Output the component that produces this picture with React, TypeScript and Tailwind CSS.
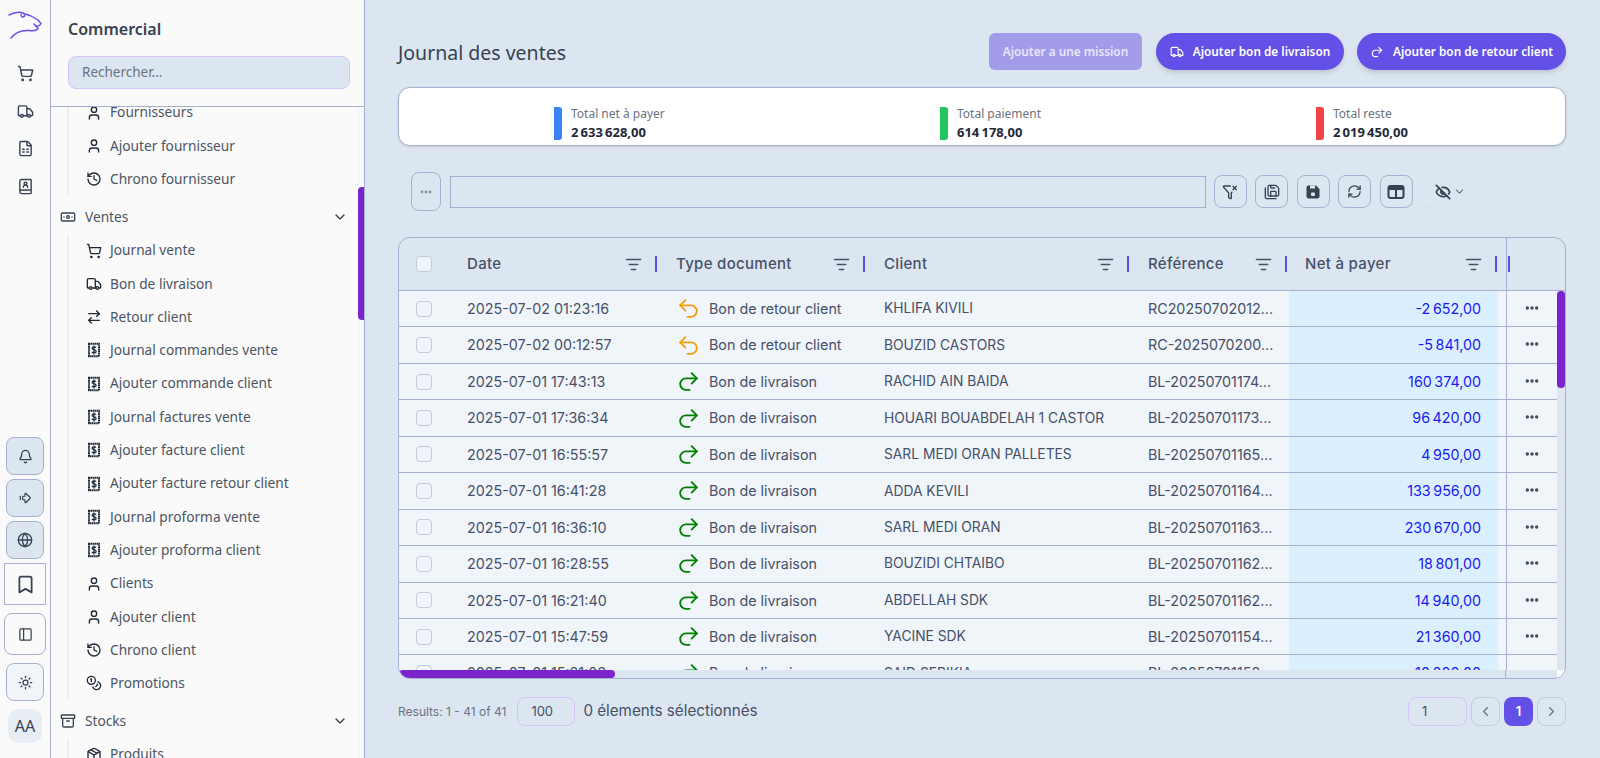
import {
  Archive, ArrowRightLeft, Banknote, Bell, Bookmark, ChevronDown, ChevronLeft, ChevronRight, Coins, Ellipsis, EyeOff,
  FunnelX, Globe, History, ListFilter, Package, PanelLeft, Redo2, RefreshCw, SaveAll, ShoppingCart,
  Sun, Truck, Undo2, User, ArrowBigRightDash, BookUser, FileSpreadsheet,
} from 'lucide-react'
import type { ReactNode } from 'react'

const segoe = 'font-["Noto_Sans",sans-serif]'

function Bill() {
  return (
    <svg width="16" height="16" viewBox="0 0 16 16" fill="none" stroke="currentColor">
      <rect x="3" y="1.750" width="10" height="12.500" strokeWidth="2" strokeDasharray="1.5 0.4" />
      <path d="M10 5.700c-.4-.6-1.100-.9-2-.9-1.100 0-1.900.5-1.900 1.400 0 1.900 4 1 4 3.200 0 .9-.8 1.500-2 1.500-1 0-1.800-.4-2.200-1M8 3.600v8.800" strokeWidth="1.300" />
    </svg>
  )
}

function FloppyFilled() {
  return (
    <svg width="16" height="16" viewBox="0 0 16 16">
      <path fill="currentColor" d="M1.500 3.500A2 2 0 0 1 3.500 1.500H11l3.500 3.500v7.500a2 2 0 0 1-2 2h-9a2 2 0 0 1-2-2Z" />
      <rect x="5" y="1.500" width="5" height="3" fill="#dce6f1" />
      <rect x="6" y="8.500" width="4" height="3.500" rx="1" fill="#dce6f1" />
    </svg>
  )
}

function ColumnsFilled() {
  return (
    <svg width="18" height="16" viewBox="0 0 18 16" fill="none" stroke="currentColor">
      <rect x="1.500" y="2" width="15" height="12" rx="2" strokeWidth="2" />
      <path d="M2 4.500h14" strokeWidth="3" />
      <path d="M9 4v10" strokeWidth="2" />
    </svg>
  )
}

type Item = { icon: ReactNode; label: string }

const user = <User size={16} />
const hist = <History size={16} />
const bill = <Bill />

const topItems: Item[] = [
  { icon: user, label: 'Fournisseurs' },
  { icon: user, label: 'Ajouter fournisseur' },
  { icon: hist, label: 'Chrono fournisseur' },
]

const salesItems: Item[] = [
  { icon: <ShoppingCart size={16} />, label: 'Journal vente' },
  { icon: <Truck size={16} />, label: 'Bon de livraison' },
  { icon: <ArrowRightLeft size={16} />, label: 'Retour client' },
  { icon: bill, label: 'Journal commandes vente' },
  { icon: bill, label: 'Ajouter commande client' },
  { icon: bill, label: 'Journal factures vente' },
  { icon: bill, label: 'Ajouter facture client' },
  { icon: bill, label: 'Ajouter facture retour client' },
  { icon: bill, label: 'Journal proforma vente' },
  { icon: bill, label: 'Ajouter proforma client' },
  { icon: user, label: 'Clients' },
  { icon: user, label: 'Ajouter client' },
  { icon: hist, label: 'Chrono client' },
  { icon: <Coins size={16} />, label: 'Promotions' },
]

const rows = [
  ['2025-07-02 01:23:16', 'r', 'KHLIFA KIVILI', 'RC20250702012...', '-2\u202f652,00'],
  ['2025-07-02 00:12:57', 'r', 'BOUZID CASTORS', 'RC-2025070200...', '-5\u202f841,00'],
  ['2025-07-01 17:43:13', 'l', 'RACHID AIN BAIDA', 'BL-20250701174...', '160\u202f374,00'],
  ['2025-07-01 17:36:34', 'l', 'HOUARI BOUABDELAH 1 CASTOR', 'BL-20250701173...', '96\u202f420,00'],
  ['2025-07-01 16:55:57', 'l', 'SARL MEDI ORAN PALLETES', 'BL-20250701165...', '4\u202f950,00'],
  ['2025-07-01 16:41:28', 'l', 'ADDA KEVILI', 'BL-20250701164...', '133\u202f956,00'],
  ['2025-07-01 16:36:10', 'l', 'SARL MEDI ORAN', 'BL-20250701163...', '230\u202f670,00'],
  ['2025-07-01 16:28:55', 'l', 'BOUZIDI CHTAIBO', 'BL-20250701162...', '18\u202f801,00'],
  ['2025-07-01 16:21:40', 'l', 'ABDELLAH SDK', 'BL-20250701162...', '14\u202f940,00'],
  ['2025-07-01 15:47:59', 'l', 'YACINE SDK', 'BL-20250701154...', '21\u202f360,00'],
  ['2025-07-01 15:21:03', 'l', 'SAID SERIKIA', 'BL-20250701152...', '10\u202f000,00'],
]

function NavItem({ item }: { item: Item }) {
  return (
    <div className="flex h-[33.3px] items-center">
      <span className="flex w-4 shrink-0 justify-center text-[#1f2937]">{item.icon}</span>
      <span className="ml-[8px] text-[13.7px] text-[#4b5563]">{item.label}</span>
    </div>
  )
}

function Section({ icon, label }: { icon: ReactNode; label: string }) {
  return (
    <div className="flex h-[38px] items-center pl-[9px] pr-[16px] text-[#4b5563]">
      <span className="flex w-4 justify-center text-[#374151]">{icon}</span>
      <span className="ml-[9px] flex-1 text-[13.7px]">{label}</span>
      <ChevronDown size={16} className="text-[#374151]" />
    </div>
  )
}

function SubList({ items }: { items: Item[] }) {
  return (
    <div className="ml-[16px] -mt-[2px] mb-[2px] border-l-2 border-[#f0f0f0] pl-[17px]">
      {items.map((i) => (
        <NavItem key={i.label} item={i} />
      ))}
    </div>
  )
}

function Sidebar() {
  return (
    <aside className={`flex w-[365px] shrink-0 bg-[#fafafa] ${segoe}`}>
      <div className="flex w-[51px] shrink-0 flex-col items-center border-r border-[#a7b1cf] text-[#374151]">
        <svg width="36" height="30" viewBox="7 10 36 30" fill="none" stroke="#6d4dee" strokeWidth="1.500" strokeLinecap="round" className="mt-[10px]">
          <path d="M9 15C13 13 17 12 21 12.500 24 13 25 14 24.500 16 23 18 21 17 21 14.500" />
          <path d="M25 14C30 15 34 17 38 20L41 23.500C40 25.500 38 26.500 36 26L34 24" />
          <path d="M36 26L38 28.500C36 31 33 31 30 30.500 24 30 16 31 11 38" />
        </svg>
        <ShoppingCart size={17} className="mt-[25px]" />
        <Truck size={17} className="mt-[21px]" />
        <FileSpreadsheet size={17} className="mt-[20px]" />
        <BookUser size={17} className="mt-[21px]" />
        <div className="mt-[242px] flex h-[38px] w-[38px] items-center justify-center rounded-lg border border-[#a7b1cf] bg-[#dce6f1]">
          <Bell size={15} />
        </div>
        <div className="mt-[4px] flex h-[38px] w-[38px] items-center justify-center rounded-lg border border-[#a7b1cf] bg-[#dce6f1]">
          <ArrowBigRightDash size={14} />
        </div>
        <div className="mt-[4px] flex h-[38px] w-[38px] items-center justify-center rounded-lg border border-[#a7b1cf] bg-[#dce6f1]">
          <Globe size={16} />
        </div>
        <div className="mt-[4px] flex h-[42px] w-[42px] items-center justify-center border border-[#a7b1cf]">
          <Bookmark size={21} />
        </div>
        <div className="mt-[8px] flex h-[42px] w-[42px] items-center justify-center rounded-lg border border-[#a7b1cf]">
          <PanelLeft size={15} />
        </div>
        <div className="mt-[8px] flex h-[38px] w-[38px] items-center justify-center rounded-lg border border-[#a7b1cf] bg-[#f0f5fa]">
          <Sun size={15} />
        </div>
        <div className="mt-[8px] flex h-[34px] w-[34px] items-center justify-center rounded-[10px] bg-[#e8edf3] text-[16px]">AA</div>
      </div>

      <div className="flex min-w-0 flex-1 flex-col border-r border-[#a7b1cf]">
        <div className="h-[107px] shrink-0 border-b border-[#a7b1cf] pl-[17px] pr-[14px]">
          <h2 className="mt-[17px] text-[16px] leading-[24px] font-semibold text-[#374151]">Commercial</h2>
          <div className="mt-[15px] flex h-[33px] items-center rounded-lg border border-[#d4c4f7] bg-[#dce6f1] px-[13px] text-[13.500px] text-[#6b7280]">
            Rechercher...
          </div>
        </div>
        <div className="relative flex-1 overflow-hidden">
          <div className="-mt-[11px]">
            <SubList items={topItems} />
            <Section icon={<Banknote size={16} />} label="Ventes" />
            <SubList items={salesItems} />
            <Section icon={<Archive size={16} />} label="Stocks" />
            <SubList items={[{ icon: <Package size={16} />, label: 'Produits' }]} />
          </div>
          <div className="absolute top-0 right-[5px] bottom-0 w-px bg-[#eef0f5]" />
          <div className="absolute top-[80px] right-0 h-[133px] w-[6px] rounded-l-sm bg-[#7b24cb]" />
        </div>
      </div>
    </aside>
  )
}

function Stat({ color, label, value, width }: { color: string; label: string; value: string; width: string }) {
  return (
    <div className={`flex items-center ${width}`}>
      <div className={`h-[33px] w-[8px] rounded-r-[3px] ${color}`} />
      <div className="ml-[9px]">
        <div className="text-[12px] leading-[16px] text-[#6b7280]">{label}</div>
        <div className="mt-[1px] text-[13px] leading-[18px] font-bold text-[#1f2937]">{value}</div>
      </div>
    </div>
  )
}

function ToolBtn({ children }: { children: ReactNode }) {
  return (
    <div className="flex h-[33px] w-[33px] shrink-0 items-center justify-center rounded-lg border border-[#a7b1cf] text-[#374151]">
      {children}
    </div>
  )
}

function HeadCell({ label, width, tail }: { label: string; width: string; tail: string }) {
  return (
    <div className={`flex h-full shrink-0 items-center pl-4 ${tail} ${width}`}>
      <span className="flex-1 text-[15px] font-medium tracking-[0.3px] text-[#475067]">{label}</span>
      <ListFilter size={17} className="mr-[13px] text-[#475067]" />
      <div className="h-4 w-[2px] bg-[#5b4fe0]" />
    </div>
  )
}

function Checkbox() {
  return (
    <div className="flex w-[52px] shrink-0 justify-center pr-[3px]">
      <div className="h-4 w-4 rounded-[4px] border border-[#c3cad8] bg-[#f0f5fa]" />
    </div>
  )
}

function Row({ row }: { row: string[] }) {
  const ret = row[1] === 'r'
  return (
    <div className="flex h-[36.44px] shrink-0 items-center border-b border-[#a7b1cf] bg-[#f0f5fa] text-[14.300px] text-[#475067]">
      <Checkbox />
      <div className="w-[209px] shrink-0 pl-4">{row[0]}</div>
      <div className="flex w-[208px] shrink-0 items-center pl-[16px]">
        {ret ? (
          <Undo2 size={25} strokeWidth={1.8} className="text-[#f59e0b]" />
        ) : (
          <Redo2 size={25} strokeWidth={1.8} className="text-[#008000]" />
        )}
        <span className="ml-[8px]">{ret ? 'Bon de retour client' : 'Bon de livraison'}</span>
      </div>
      <div className="w-[264px] shrink-0 pl-4 text-[13.800px]">{row[2]}</div>
      <div className="w-[157px] shrink-0 pl-4">{row[3]}</div>
      <div className="flex h-full w-[209px] shrink-0 items-center justify-end bg-[#dbf0ff] pr-[17px] text-[#1a1aee]">{row[4]}</div>
      <div className="w-2 shrink-0" />
      <div className="flex h-full flex-1 justify-center border-l border-[#a7b1cf] pt-[9px]">
        <Ellipsis size={16} strokeWidth={3} className="text-[#374151]" />
      </div>
    </div>
  )
}

function DataTable() {
  return (
    <div className="relative mt-[26px] flex h-[442px] flex-col overflow-hidden rounded-xl border border-[#a7b1cf] font-['Inter',sans-serif]">
      <div className="flex h-[53px] shrink-0 items-center border-b border-[#a7b1cf]">
        <Checkbox />
        <HeadCell label="Date" width="w-[209px]" tail="pr-[3px]" />
        <HeadCell label="Type document" width="w-[208px]" tail="pr-[3px]" />
        <HeadCell label="Client" width="w-[264px]" tail="pr-[3px]" />
        <HeadCell label="Référence" width="w-[157px]" tail="pr-[2px]" />
        <HeadCell label="Net à payer" width="w-[209px]" tail="pr-[1px]" />
        <div className="w-2 shrink-0" />
        <div className="flex h-full flex-1 items-center border-l border-[#a7b1cf] pl-px">
          <div className="h-4 w-[2px] bg-[#5b4fe0]" />
        </div>
      </div>
      <div className="flex min-h-0 flex-1">
        <div className="flex min-w-0 flex-1 flex-col overflow-hidden">
          {rows.map((r) => (
            <Row key={r[0]} row={r} />
          ))}
        </div>
        <div className="w-2 shrink-0">
          <div className="h-[97px] w-2 rounded-full bg-[#7b24cb]" />
        </div>
      </div>
      <div className="flex h-2 shrink-0">
        <div className="h-2 w-[216px] rounded-full bg-[#7b24cb]" />
        <div className="flex-1" />
        <div className="h-2 w-2 bg-white" />
      </div>
      {/* column line carries on over the bottom scrollbar */}
      <div className="absolute right-[59px] bottom-0 h-2 w-px bg-[#a7b1cf]" />
    </div>
  )
}

export default function App() {
  return (
    <div className="flex h-[758px] w-[1600px] overflow-hidden bg-[#dce6f1]">
      <Sidebar />
      <main className="min-w-0 flex-1 pl-[33px] pr-[34px]">
        <div className={`flex h-[87px] items-start pt-[33px] ${segoe}`}>
          <h1 className="flex-1 pt-px text-[19.500px] leading-[38px] text-[#374151]">Journal des ventes</h1>
          <button className="flex h-[37px] w-[153px] items-center justify-center rounded-md bg-[#a29cea] text-[11.800px] font-semibold text-[#e8e6fb]">
            Ajouter a une mission
          </button>
          <button className="ml-[14px] flex h-[37px] w-[188px] items-center justify-center gap-[9px] rounded-full bg-[#6350e6] text-[11.800px] font-semibold text-white shadow-md">
            <Truck size={14} /> Ajouter bon de livraison
          </button>
          <button className="ml-[13px] flex h-[37px] w-[209px] items-center justify-center gap-[9px] rounded-full bg-[#6350e6] text-[11.800px] font-semibold text-white shadow-md">
            <Redo2 size={14} /> Ajouter bon de retour client
          </button>
        </div>

        <div className={`flex h-[59px] items-center rounded-xl border border-[#a7b1cf] bg-white pl-[155px] pt-[13px] shadow-sm ${segoe}`}>
          <Stat color="bg-[#3b82f6]" label="Total net à payer" value={'2\u202f633\u202f628,00'} width="w-[386px]" />
          <Stat color="bg-[#22c55e]" label="Total paiement" value={'614\u202f178,00'} width="w-[376px]" />
          <Stat color="bg-[#ef4444]" label="Total reste" value={'2\u202f019\u202f450,00'} width="w-[200px]" />
        </div>

        <div className="mt-[26px] flex h-[39px] items-center pl-[13px] pr-[87px]">
          <div className="flex h-[39px] w-[30px] shrink-0 items-center justify-center rounded-lg border border-[#a7b1cf] text-[#8b93a7]">
            <Ellipsis size={14} strokeWidth={3} />
          </div>
          <div className="ml-[9px] h-[32px] flex-1 border border-[#a7b1cf]" />
          <div className="ml-[8px] flex items-center gap-[8.5px]">
            <ToolBtn><FunnelX size={16} /></ToolBtn>
            <ToolBtn><SaveAll size={16} /></ToolBtn>
            <ToolBtn><FloppyFilled /></ToolBtn>
            <ToolBtn><RefreshCw size={15} /></ToolBtn>
            <ToolBtn><ColumnsFilled /></ToolBtn>
            <div className="flex h-[33px] w-[58px] items-center justify-center gap-[2px] rounded-lg border border-[#d8e2ee] text-[#374151]">
              <EyeOff size={16} strokeWidth={2.6} />
              <ChevronDown size={13} className="text-[#6b7280]" />
            </div>
          </div>
        </div>

        <DataTable />

        <div className="mt-[18px] flex h-[29px] items-center font-['Inter',sans-serif]">
          <span className="text-[12px] text-[#6b7280]">Results: 1 - 41 of 41</span>
          <div className="ml-[11px] flex h-[29px] w-[58px] items-center rounded-lg border border-[#d4c4f7] pl-[13px] text-[13px] text-[#475067]">100</div>
          <span className="ml-[8px] flex-1 text-[15.200px] text-[#475067]">0 élements sélectionnés</span>
          <div className="flex h-[29px] w-[59px] items-center rounded-lg border border-[#d4c4f7] pl-[13px] text-[13px] text-[#475067]">1</div>
          <div className="ml-[4px] flex h-[29px] w-[29px] items-center justify-center rounded-lg border border-[#c3cad8] text-[#6b7280]"><ChevronLeft size={15} /></div>
          <div className="ml-[4px] flex h-[29px] w-[29px] items-center justify-center rounded-lg bg-[#6350e6] text-[13px] font-semibold text-white">1</div>
          <div className="ml-[4px] flex h-[29px] w-[29px] items-center justify-center rounded-lg border border-[#c3cad8] text-[#6b7280]"><ChevronRight size={15} /></div>
        </div>
      </main>
    </div>
  )
}
